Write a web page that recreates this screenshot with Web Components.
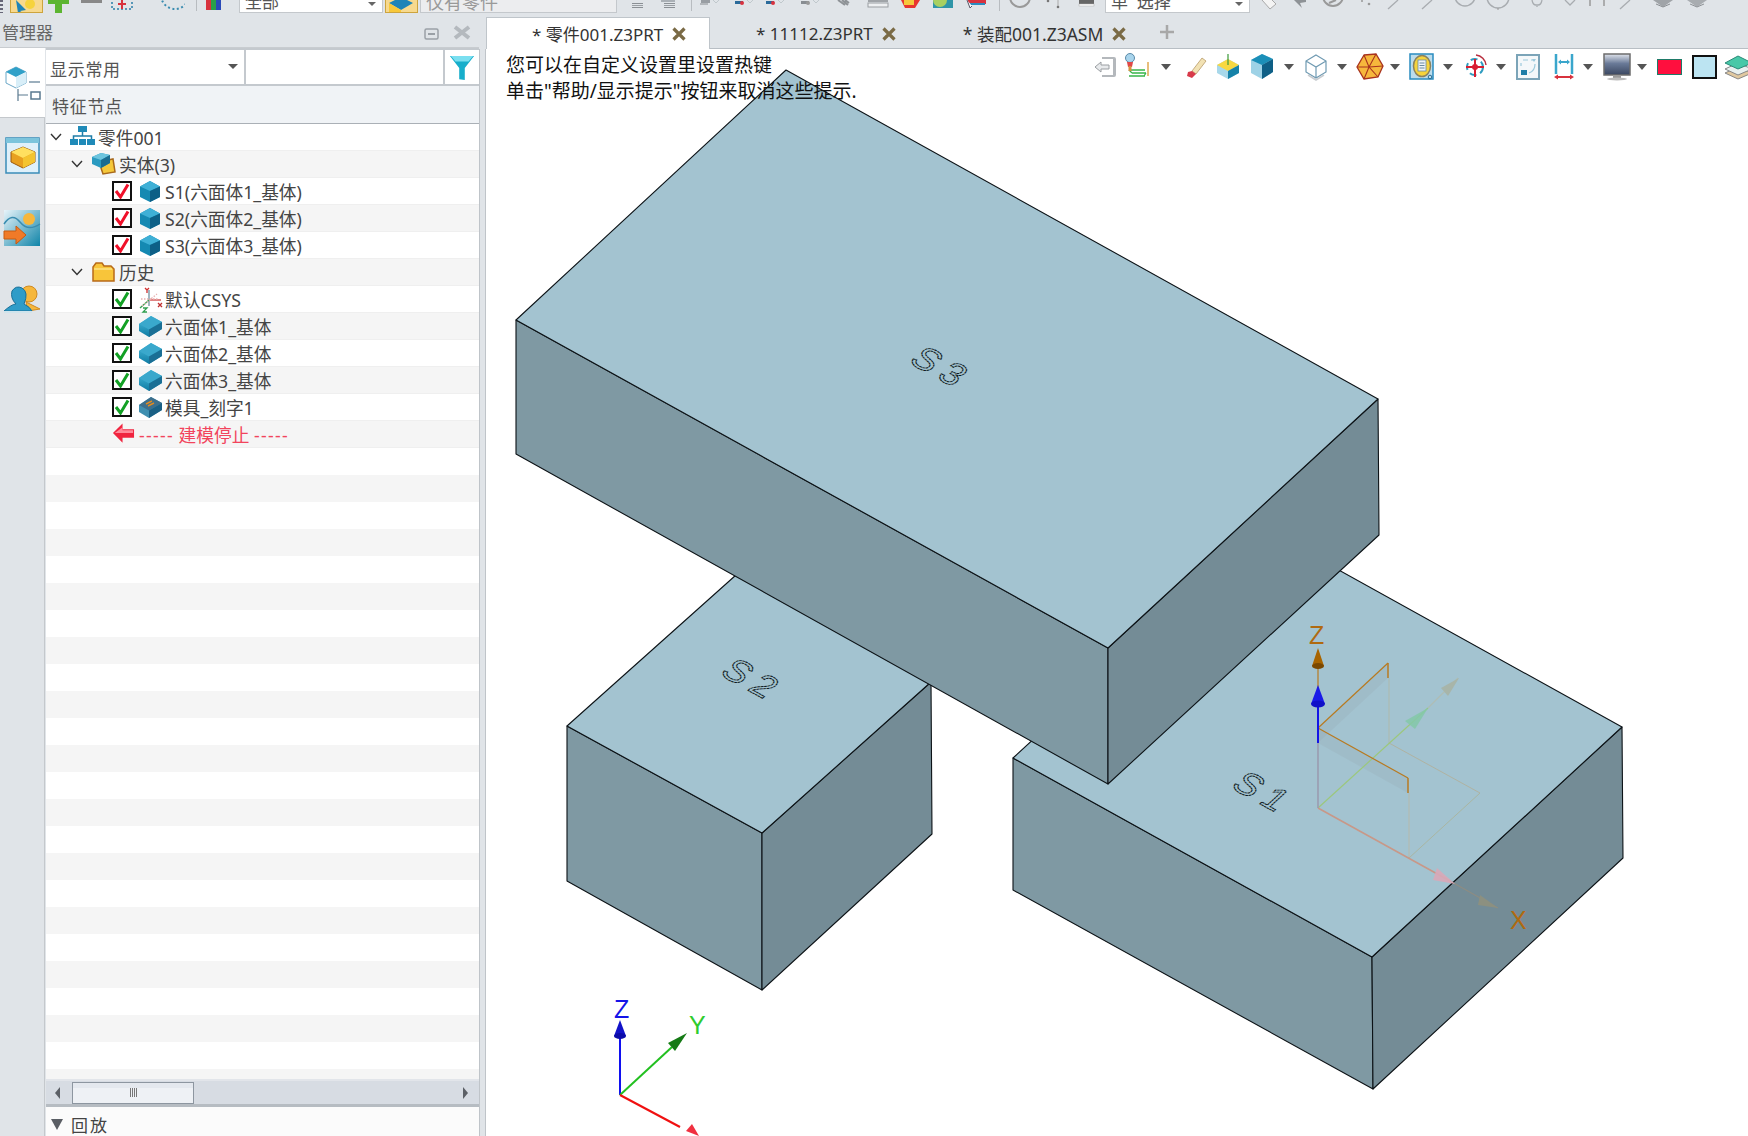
<!DOCTYPE html>
<html><head><meta charset="utf-8">
<style>
html,body{margin:0;padding:0;background:#fff}
body{font-family:"Noto Sans","Noto Sans CJK SC",sans-serif}
</style></head>
<body>
<app-shell>
  <top-bar slot="top"></top-bar>
  <manager-panel slot="left">
    <tree-row indent="3" chev icon="asm">零件001</tree-row>
    <tree-row indent="24" chev icon="solid" alt>实体(3)</tree-row>
    <tree-row indent="66" check="red" icon="cube">S1(六面体1_基体)</tree-row>
    <tree-row indent="66" check="red" icon="cube" alt>S2(六面体2_基体)</tree-row>
    <tree-row indent="66" check="red" icon="cube">S3(六面体3_基体)</tree-row>
    <tree-row indent="24" chev icon="folder" alt>历史</tree-row>
    <tree-row indent="66" check="green" icon="csys">默认CSYS</tree-row>
    <tree-row indent="66" check="green" icon="flat" alt>六面体1_基体</tree-row>
    <tree-row indent="66" check="green" icon="flat">六面体2_基体</tree-row>
    <tree-row indent="66" check="green" icon="flat" alt>六面体3_基体</tree-row>
    <tree-row indent="66" check="green" icon="engrave">模具_刻字1</tree-row>
    <tree-row indent="66" icon="stop" stop alt><span style="letter-spacing:1.300px">-----</span> 建模停止 <span style="letter-spacing:1.300px">-----</span></tree-row>
  </manager-panel>
  <doc-area slot="right"></doc-area>
</app-shell>
<script>
const ICONS={
cube:`<path d="M12 2 22 7.500V18L12 23 2 18V7.500Z" fill="#1589b2"/><path d="M12 2 22 7.500 12 12 2 7.500Z" fill="#3fb0d6"/><path d="M12 12 22 7.500V18L12 23Z" fill="#0d5f86"/>`,
flat:`<defs><linearGradient id="f" x1="0" y1="0" x2="0" y2="1"><stop offset="0" stop-color="#4cc0e0"/><stop offset="1" stop-color="#0f7ba3"/></linearGradient></defs><path d="M13 2 24 8V15L11 23 1 17V10Z" fill="url(#f)"/><path d="M13 2 24 8 11 15.500 1 10Z" fill="#3aa8cc"/><path d="M11 15.500 24 8V15L11 23Z" fill="#1a6f95"/>`,
engrave:`<path d="M13 2 24 8V15L11 23 1 17V10Z" fill="#3f8fb0"/><path d="M13 2 24 8 11 15.500 1 10Z" fill="#3d6f8c"/><path d="M11 15.500 24 8V15L11 23Z" fill="#1a6085"/><path d="M8 9 14 6M10 11 16 8" stroke="#e08a20" stroke-width="1.500"/>`,
asm:`<rect x="8" y="1" width="9" height="6" fill="#1f8ab8"/><path d="M12.500 7V11M3.500 15V11H21.500V15" fill="none" stroke="#1f7ea8" stroke-width="1.500"/><rect x="0" y="14" width="8" height="6" fill="#1f8ab8"/><rect x="9" y="14" width="7" height="6" fill="#1f8ab8"/><rect x="17" y="14" width="8" height="6" fill="#1f8ab8"/>`,
solid:`<path d="M8 10 22 7 24 20 12 22Z" fill="#f5c83a" stroke="#a8691c" stroke-width="1.500"/><path d="M10 1 19 3V11L10 16 1 12V5Z" fill="#2a9ac0"/><path d="M10 1 19 3 10 8 1 5Z" fill="#6cc4de"/><path d="M10 8 19 3V11L10 16Z" fill="#1a6c90"/>`,
folder:`<path d="M2 21V7L5 3H11L13 6H20L23 9V21Z" fill="#f8c53a" stroke="#b86a18" stroke-width="1.500"/><path d="M3 9H21" stroke="#fff2a8"/>`,
csys:`<g fill="none" stroke-width="1.300"><path d="M11 3V19" stroke="#7090a0"/><path d="M11 13H23" stroke="#d04040"/><path d="M11 13 2 21" stroke="#30a050"/><path d="M3 12H20M4 19 19 7" stroke="#e8b0b0" stroke-dasharray="1.500 1.500"/><path d="M7 1 9 3 11 1M9 3V6" stroke="#d03030"/><path d="M20 16 24 20M24 16 20 20" stroke="#c03030"/><path d="M5 21H9L5 25H9" stroke="#30a050"/></g>`,
stop:`<path d="M1 11 11 1V7H23V16H11V21Z" fill="#f0243f"/><path d="M3 11 11 5V8H22V11H3Z" fill="#ff8a9a"/>`,
back:`<path d="M8 4V2H20Q22 2 22 4V20Q22 22 20 22H8V20H19V4Z" fill="#b4b8bc"/><path d="M1 12 7 7V10H15V14H7V17Z" fill="#e8eaec" stroke="#9a9ea2"/>`,
mill:`<path d="M5 17H21M8 20H22M5 23H21M5 17 8 20M22 20 20 23" stroke="#39b54a" fill="none" stroke-width="1.300" transform="translate(3 0)"/><path d="M27 9V23" stroke="#e0a850" stroke-width="1.500"/><circle cx="9" cy="5" r="4.500" fill="#a8d4ec" stroke="#5a8aa8"/><path d="M6 9H12L11 14H7Z" fill="#e04848"/><rect x="7.500" y="13" width="3" height="5" fill="#d89040"/>`,
eraser:`<path d="M19 3 23 6 13 19 9 16Z" fill="#f2e2b4" stroke="#b89a68" stroke-width=".8"/><path d="M9 16 13 19 9 23 4 21 5 17Z" fill="#d83a4a"/>`,
ycube:`<path d="M12 6 23 12V20L12 26 1 20V12Z" fill="#a8d8ea"/><path d="M12 6 23 12 12 18 1 12Z" fill="#f8d840"/><path d="M12 18 23 12V20L12 26Z" fill="#1582a8"/><path d="M12 12V1" stroke="#3a9a3a" stroke-width="1.200"/>`,
bcube:`<path d="M13 1 24 6V19L13 26 2 20V7Z" fill="#9ed2e6"/><path d="M13 1 24 6 13 12 2 7Z" fill="#1b8fb8"/><path d="M13 12 24 6V19L13 26Z" fill="#0e5f86"/>`,
wcube:`<path d="M12 2 22 8V19L12 25 2 19V8ZM2 8 12 14 22 8M12 14V25" fill="#fff" stroke="#6f9ab2" stroke-width="1.200"/><path d="M4 22 12 27 20 22" fill="none" stroke="#c8ccd0" stroke-width="1.500"/>`,
poly:`<path d="M8 2 20 1 27 13 22 24 8 26 1 14Z" fill="#f6b73c" stroke="#a8321e" stroke-width="1.300"/><path d="M8 2 13 14 20 1M1 14H13L22 24M13 14 8 26M13 14 27 13" fill="none" stroke="#a8321e" stroke-width="1.100"/>`,
doc:`<rect x="1" y="1" width="23" height="25" fill="#bcdcec" stroke="#2a8cc0" stroke-width="1.500"/><ellipse cx="13" cy="13" rx="8.500" ry="10.500" fill="#f6d33c" stroke="#8a8260" stroke-width="1.500"/><rect x="9" y="7" width="8" height="11" fill="#eef4f8" stroke="#6a8aa0" stroke-width=".8"/><path d="M10.500 10H15.500M10.500 12.500H15.500M10.500 15H15.500" stroke="#6a8aa0"/><circle cx="21" cy="24" r="1.800" fill="none" stroke="#2a6c90"/>`,
target:`<g transform="translate(1 0)"><circle cx="12" cy="14" r="8" fill="none" stroke="#2e9cc0" stroke-width="2" stroke-dasharray="7 4"/><path d="M12 6V24M3 14H21" stroke="#d81e32" stroke-width="2"/><circle cx="12" cy="14" r="3" fill="#d81e32"/><path d="M13 2A11 11 0 0 1 23 12" fill="none" stroke="#b83040" stroke-width="1.500"/></g>`,
frame:`<rect x="1" y="2" width="22" height="24" fill="#f4f8fa" stroke="#7ba4b8" stroke-width="2"/><path d="M7 7H12M5 10V13M15 7H19M19 11Q19 18 13 20" fill="none" stroke="#9ccadc" stroke-width="1.200"/><path d="M16 6H20L18 9Z" fill="#9ccadc"/><rect x="5" y="17" width="6" height="5" fill="#1f7ea8"/>`,
measure:`<path d="M4 1V21M20 1V21" stroke="#3aa6cc" stroke-width="2.500"/><path d="M7 9H17" stroke="#3aa6cc" stroke-width="2"/><path d="M6 9 9 6.500V11.500ZM18 9 15 6.500V11.500Z" fill="#3aa6cc"/><path d="M4 24H20" stroke="#d8323e" stroke-width="2"/><path d="M2 24 6 21.500V26.500ZM22 24 18 21.500V26.500Z" fill="#d8323e"/>`,
monitor:`<defs><linearGradient id="m" x1="0" y1="0" x2="0" y2="1"><stop offset="0" stop-color="#e0e4ec"/><stop offset=".45" stop-color="#6a7a98"/><stop offset="1" stop-color="#3a4660"/></linearGradient></defs><rect x="1" y="1" width="26" height="21" fill="url(#m)" stroke="#6c6c6c" stroke-width="1.500"/><rect x="10" y="22" width="8" height="3" fill="#999"/><ellipse cx="14" cy="26" rx="10" ry="1.500" fill="#bbb"/>`,
layers:`<path d="M1 20 14 26 28 20 14 14Z" fill="#e0c8a0" stroke="#888"/><path d="M1 16 14 22 28 16 14 10Z" fill="#e8f0f0" stroke="#888"/><path d="M1 10 14 16 28 10 14 3Z" fill="#48c8a8" stroke="#2a8a78"/>`,
rail1:`<path d="M12 2 22 7V18L12 23 2 18V7Z" fill="#fff" stroke="#6ba8c8"/><path d="M12 2 22 7 12 12 2 7Z" fill="#2fa0c8"/><path d="M12 12 22 7V18L12 23Z" fill="#d8eef8"/><path d="M25 17H36" stroke="#5a7a90" stroke-width="1.200"/><path d="M14 24V36M14 30H24" stroke="#5a7a90" stroke-width="1.200"/><rect x="27" y="27" width="9" height="7" fill="none" stroke="#5a7a90" stroke-width="1.500"/>`,
rail2:`<rect x="1" y="1" width="33" height="35" fill="#dff0fa" stroke="#3a8cb8" stroke-width="1.500"/><rect x="1" y="1" width="33" height="5" fill="#7cc4dc"/><path d="M18 10 30 15V25L18 31 6 25V15Z" fill="#e8a020" stroke="#9a5a10"/><path d="M18 10 30 15 18 21 6 15Z" fill="#ffe060"/><path d="M18 21 30 15V25L18 31Z" fill="#f4c430"/>`,
rail3:`<defs><linearGradient id="r" x1="0" y1="0" x2="1" y2="1"><stop offset="0" stop-color="#e8f4fa"/><stop offset="1" stop-color="#0f84a8"/></linearGradient></defs><rect x="0" y="0" width="36" height="36" fill="url(#r)"/><path d="M0 14Q8 2 16 12T36 14" fill="none" stroke="#3a8cb0" stroke-width="1.500"/><circle cx="25" cy="9" r="6" fill="#f6b73c"/><path d="M0 21H12V16L22 25 12 34V29H0Z" fill="#f07a28" stroke="#c85a10"/>`,
rail4:`<circle cx="25" cy="12" r="8" fill="#f6b73c" stroke="#d08a20"/><path d="M22 20 36 27 24 29Z" fill="#f6b73c" stroke="#d08a20"/><path d="M0 29Q8 22 12 22 6 16 8 9 12 3 18 6 25 10 20 22Q26 25 28 29Z" fill="#2f9cc8" stroke="#1a7098"/><path d="M0 29H28V31H0Z" fill="#d0e4ec"/>`,
filter:`<path d="M1 1H27L17 14V27L11 26V14Z" fill="#17aecb"/><path d="M2 1H26L21 7H7Z" fill="#7adff0"/>`
};
function svg(name,w,h,vw,vh){return `<svg xmlns="http://www.w3.org/2000/svg" width="${w}" height="${h}" viewBox="0 0 ${vw||w} ${vh||h}" style="display:block;overflow:visible;flex:none">${ICONS[name]||""}</svg>`}
const def=(n,c)=>customElements.define(n,c);
class Base extends HTMLElement{constructor(){super();this.attachShadow({mode:"open"})}}

def("app-shell",class extends Base{constructor(){super();this.shadowRoot.innerHTML=`<style>
:host{display:grid;grid-template-columns:479px 7px 1fr;grid-template-rows:13px 1fr;width:1748px;height:1136px;overflow:hidden;background:#e0e4e8;color:#444}
.top{grid-column:1/-1;min-width:0;overflow:hidden}
.div{background:#e0e4e8;border-left:1px solid #bfc4c9;border-right:1px solid #bfc4c9;margin:36px 0 0}
.l,.r{min-width:0;min-height:0}
</style><div class="top"><slot name="top"></slot></div><div class="l"><slot name="left"></slot></div><div class="div"></div><div class="r"><slot name="right"></slot></div>`}});

def("top-bar",class extends Base{constructor(){super();
const g=(c)=>`<svg width="24" height="24" viewBox="0 0 24 24" style="display:block">${c}</svg>`;
const arrowish='<path d="M17 0 20 3 23 0" fill="none" stroke="#c0c8cc"/>';
const tick='<rect x="3" y="3" width="11" height="1" fill="#8a8f94"/><rect x="3" y="5" width="11" height="1" fill="#9a9fa4"/><rect x="3" y="7" width="11" height="1" fill="#8a8f94"/>';
const small=[[641,tick],[673,'<rect x="-4" y="0" width="18" height="2" fill="#aab0b6"/>'+tick],
[708,'<rect x="5" y="0" width="9" height="3" fill="#999ea3"/><rect x="4" y="3" width="8" height="2" fill="#b4b8bc"/>'+arrowish],
[742,'<rect x="5" y="1" width="8" height="3" fill="#2a6a9a"/><circle cx="12" cy="3" r="2" fill="#d8323e"/>'+arrowish],
[773,'<rect x="5" y="1" width="8" height="3" fill="#2a6a9a"/><circle cx="12" cy="3" r="2" fill="#d8323e"/>'+arrowish],
[808,'<rect x="5" y="1" width="8" height="3" fill="#888d92"/><circle cx="12" cy="3" r="2" fill="#999"/>'+arrowish],
[845,'<path d="M5 0 12 5M9 0 15 5M12 0 16 3" stroke="#8e9296" stroke-width="2"/>'],
[878,'<rect x="2" y="0" width="20" height="2" fill="#a0a4a8"/><rect x="2" y="3" width="20" height="4" fill="#eef0f2" stroke="#9a9ea2"/>'],
[910,'<path d="M3 0H22L17 8 7 8Z" fill="#e8352e"/><rect x="6" y="0" width="10" height="5" fill="#f6c83c"/>'],
[943,'<rect x="2" y="0" width="20" height="8" fill="#2f95a8"/><circle cx="9" cy="0" r="7" fill="#a8d060"/><path d="M9 0A7 7 0 0 0 2 0" fill="#f2f2ea"/>'],
[977,'<rect x="3" y="0" width="18" height="4" fill="#d8323e"/><rect x="4" y="3" width="16" height="2" fill="#2a8cc0"/><path d="M2 0 5 8 7 6" fill="#fff" stroke="#556"/>'],
[1020,'<circle cx="12" cy="-3" r="10" fill="none" stroke="#999" stroke-width="2"/>'],
[1048,'<circle cx="12" cy="1" r="1.300" fill="#777"/>'],[1058,'<path d="M12 0V6" stroke="#aaa"/><circle cx="12" cy="7" r="1.300" fill="#777"/>'],
[1087,'<rect x="4" y="0" width="15" height="4" fill="#666"/><rect x="4" y="4" width="15" height="2" fill="#fff" stroke="#aaa" stroke-width=".5"/>'],
[1270,'<path d="M4 0 12 9 18 4 14 0" fill="#f4f4f4" stroke="#a8a8a8"/>'],
[1300,'<path d="M6 0 14 8 12 3 18 2V0Z" fill="#8e9296"/>'],
[1333,'<circle cx="12" cy="-4" r="10" fill="none" stroke="#999" stroke-width="2"/><path d="M8 3 15 0" stroke="#999" stroke-width="2"/>'],
[1365,'<circle cx="9" cy="1" r="1" fill="#999"/><circle cx="16" cy="4" r="1.300" fill="#999"/>'],
[1393,'<path d="M17 0 7 9" stroke="#a8acb0" stroke-width="1.300"/>'],[1427,'<path d="M17 0 7 9" stroke="#a8acb0" stroke-width="1.300"/>'],
[1465,'<circle cx="12" cy="-4" r="10" fill="none" stroke="#a8acb0" stroke-width="1.500"/>'],
[1498,'<circle cx="12" cy="-3" r="11" fill="none" stroke="#a8acb0" stroke-width="1.500"/><path d="M12 8V10" stroke="#999"/>'],
[1537,'<path d="M7 0Q8 5 11 5H13Q16 5 17 0M12 6V7" fill="none" stroke="#a8acb0" stroke-width="1.300"/>'],
[1570,'<path d="M7 0 12 5 17 0" fill="none" stroke="#a8acb0" stroke-width="1.300"/>'],
[1597,'<path d="M5 0V6M19 0V6" stroke="#999" stroke-width="1.500"/>'],
[1625,'<path d="M17 0 7 9" stroke="#a8acb0" stroke-width="1.300"/>'],
[1663,'<path d="M2 0H22L12 7Z" fill="#a0a4a8"/><path d="M5 4 12 7 19 4" fill="none" stroke="#8a8e92"/>'],
[1697,'<path d="M2 0H22L12 7Z" fill="#a8acb0"/><path d="M5 4 12 7 19 4" fill="none" stroke="#8e9296"/>']];
const lead=(l,w,c)=>`<span class="i" style="margin-left:${l}px;width:${w}px">${g(c)}</span>`;
let html=`<span class="dots"></span>`;
html+=`<span class="btn"><svg width="30" height="24" viewBox="0 0 30 24"><path d="M5 0 15 10 9 11 12 13H7Z" fill="#1e84b8"/><circle cx="19" cy="4" r="5" fill="#f6d33c"/></svg></span>`;
html+=lead(3,24,'<rect x="9" y="0" width="7" height="13" fill="#5cb531"/><rect x="2" y="0" width="21" height="4" fill="#5cb531"/>');
html+=lead(9,24,'<rect x="2" y="0" width="21" height="3" fill="#888"/>');
html+=lead(8,26,'<rect x="1" y="-6" width="20" height="15" fill="none" stroke="#2a7ea8" stroke-width="1.500" stroke-dasharray="2 2"/><path d="M11 0V9M7 4H15" stroke="#d8323e" stroke-width="2"/>');
html+=lead(24,28,'<circle cx="14" cy="-5" r="14" fill="none" stroke="#3a8cb0" stroke-width="2" stroke-dasharray="2 2.500"/>');
html+=`<span class="sep" style="margin-left:7px"></span>`;
html+=lead(9,16,'<rect x="0" y="0" width="5" height="10" fill="#d8323e"/><rect x="5" y="0" width="5" height="10" fill="#2aa04a"/><rect x="10" y="0" width="5" height="10" fill="#2a4ab8"/>');
html+=`<span class="combo" style="width:144px;margin-left:17px"><b style="font-size:17px">全部</b><i></i></span>`;
html+=`<span class="btn" style="margin-left:2px"><svg width="30" height="24" viewBox="0 0 30 24"><path d="M15 -3 27 3 15 10 3 3Z" fill="#1e84b8"/><path d="M3 3 15 10V12H3Z" fill="#f8c83a"/></svg></span>`;
html+=`<span class="combo dis" style="width:197px;margin-left:2px"><b style="font-size:18px">仅有零件</b></span>`;
this.shadowRoot.innerHTML=`<style>
:host{display:block;position:relative;height:13px;background:#e0e4e8;overflow:hidden;font:16px "Noto Sans","Noto Sans CJK SC",sans-serif;color:#555}
.row{display:flex;align-items:flex-start;height:13px}
.i{display:block;flex:none;height:13px;overflow:hidden}
.dots{width:3px;flex:none;height:13px;margin-right:7px;background:repeating-linear-gradient(#667 0 2px,transparent 2px 4px)}
.btn{display:block;flex:none;width:31px;height:12px;background:#f7d98e;border:1px solid #cda43e;border-top:0;overflow:hidden}
.sep{display:block;flex:none;width:1px;height:11px;background:#b8bcc0}
.combo{display:flex;flex:none;height:13px;box-sizing:border-box;background:#fff;border:1px solid #c4c8cc;border-top:0;position:relative;overflow:hidden;align-items:flex-end}
.combo b{font-weight:400;font-size:16px;line-height:22px;height:13px;display:block;margin:-9px 0 0 5px;align-self:flex-start;white-space:pre}
.combo i{position:absolute;right:6px;top:2px;border:4px solid transparent;border-top-color:#666}
.dis{background:#ecedef;color:#999}
.abs{position:absolute;top:0}
</style><div class="row">${html}</div>
${small.map(([x,c])=>`<span class="i abs" style="left:${x-12}px;width:24px">${g(c)}</span>`).join("")}
<span class="sep abs" style="left:691px"></span><span class="sep abs" style="left:999px"></span>
<span class="combo abs" style="left:1105px;width:145px"><b style="font-size:17px">单  选择</b><i></i></span>`}});

def("manager-panel",class extends Base{constructor(){super();this.shadowRoot.innerHTML=`<style>
:host{display:flex;flex-direction:column;height:100%;font:17px "Noto Sans","Noto Sans CJK SC",sans-serif;color:#555}
.title{height:35px;flex:none;display:flex;align-items:flex-end;padding:0 8px 1px 2px;box-sizing:border-box;gap:0;border-bottom:1px solid #c8ccd0;color:#666}
.title span{flex:1;font-size:17px;line-height:26px}
.title svg{display:block;margin-bottom:6px}
.body{flex:1;display:flex;min-height:0}
.rail{width:44px;flex:none;display:flex;flex-direction:column;align-items:center;background:#e0e4e8;border-right:1px solid #c4c8cc;box-sizing:content-box}
.rtab{align-self:stretch;height:70px;background:#fff;border-bottom:1px solid #c4c8cc;box-sizing:border-box;display:flex;justify-content:center;padding-top:17px;margin-right:-1px}
.rail .a{margin-top:19px}.rail .b{margin-top:36px}.rail .c{margin-top:36px}
.main{flex:1;display:flex;flex-direction:column;min-width:0;margin-left:1px}
.bar{display:flex;gap:2px;height:38px;flex:none;box-sizing:border-box;padding:2px 0;background:#c4c9ce}
.cb{flex:none;background:#fff;display:flex;align-items:center;position:relative;box-sizing:border-box;padding-top:2px}
.cb i{position:absolute;right:6px;top:14px;border:5px solid transparent;border-top:5px solid #555;border-bottom:0}
.head{height:38px;flex:none;background:#f0f3f6;border-bottom:1px solid #aab0b6;box-sizing:border-box;padding:2px 0 0 6px;line-height:38px;font-size:17px;letter-spacing:.7px;color:#555}
.tree{flex:1;min-height:0;background:repeating-linear-gradient(#fff 0 27px,#f5f5f5 27px 54px);overflow:hidden}
.scroll{height:25px;flex:none;background:#d7dce3;border-top:2px solid #e2e5ea;box-sizing:border-box;display:flex;align-items:center;padding-left:9px;position:relative}
.tl,.tr{width:0;height:0;border:6px solid transparent;border-left:0;border-right:5px solid #5c6066;flex:none}
.tr{border-right:0;border-left:5px solid #5c6066;position:absolute;right:11px}
.thumb{margin-left:12px;width:122px;height:22px;background:linear-gradient(#e4e8ee 0 5px,#eef1f5 5px);border:1px solid #8d96a0;box-sizing:border-box;display:flex;justify-content:center;align-items:center}
.thumb u{display:block;width:7px;height:9px;background:repeating-linear-gradient(90deg,#777 0 1px,transparent 1px 2px)}
.sepb{height:3px;flex:none;background:#b6bcc2}
.foot{height:29px;flex:none;background:#fbfbfb;display:flex;align-items:center;padding-left:5px;gap:8px;font-size:17px;letter-spacing:2px;color:#444;padding-top:6px;box-sizing:border-box}
.foot i{width:0;height:0;border:6px solid transparent;border-top:11px solid #5a5e64;border-bottom:0}
</style>
<div class="title"><span>管理器</span>
<svg width="15" height="12" viewBox="0 0 15 12" style="margin-right:14px"><rect x="1" y="1" width="13" height="10" rx="1.500" fill="none" stroke="#9aa0a6" stroke-width="1.500"/><rect x="4" y="5" width="7" height="2" fill="#9aa0a6"/></svg>
<svg width="18" height="15" viewBox="0 0 18 15"><path d="M2 2 16 13M16 2 2 13" stroke="#b4b9be" stroke-width="4"/></svg></div>
<div class="body"><div class="rail">
<div class="rtab">${svg("rail1",38,38)}</div>
<div class="a">${svg("rail2",35,37)}</div><div class="b">${svg("rail3",36,36)}</div><div class="c">${svg("rail4",36,32)}</div></div>
<div class="main"><div class="bar">
<div class="cb" style="width:198px;padding-left:4px;letter-spacing:.7px">显示常用<i></i></div>
<div class="cb" style="width:197px"></div>
<div class="cb" style="width:34px;justify-content:center">${svg("filter",26,28,28,28)}</div></div>
<div class="head">特征节点</div>
<div class="tree"><slot></slot></div>
<div class="scroll"><span class="tl"></span><span class="thumb"><u></u></span><span class="tr"></span></div>
<div class="sepb"></div>
<div class="foot"><i></i>回放</div>
</div></div>`}});

def("tree-row",class extends Base{connectedCallback(){
const ind=+this.getAttribute("indent");const chk=this.getAttribute("check");const ic=this.getAttribute("icon");const chev=this.hasAttribute("chev");const stop=this.hasAttribute("stop");
const bg=this.hasAttribute("alt")?"#f5f5f5":"#fff";
let inner="";
if(chev)inner+=`<svg width="14" height="10" viewBox="0 0 14 10" style="display:block;flex:none;margin-right:7px"><path d="M2 2 7 7.500 12 2" fill="none" stroke="#333" stroke-width="1.400"/></svg>`;
if(chk){const col=chk==="red"?"#f0102a":"#12a024";inner+=`<span class="ck"><svg width="16" height="16" viewBox="0 0 16 16" style="display:block"><path d="M2 8 6.500 14 14 1.500" fill="none" stroke="${col}" stroke-width="3"/></svg></span>`}
const w=stop?23:25;
inner+=`<span class="ic" style="margin-left:${chk?6:0}px;width:${w}px">${svg(ic,w,24,stop?24:25,24)}</span>`;
this.shadowRoot.innerHTML=`<style>
:host{display:block;height:27px}
.r{height:27px;box-sizing:border-box;background:${bg};border-bottom:1px solid #efefef;display:flex;align-items:center;padding-left:${ind}px;font-size:17.700px;white-space:pre;color:${stop?"#f2445c":"#454545"}}
.ck{display:block;flex:none;width:20px;height:20px;box-sizing:border-box;border:2px solid #111;background:#fff;padding:0;overflow:hidden}
.ic{display:block;flex:none}
.t{margin-left:${stop?4:chk?2:3}px;line-height:27px;padding-top:3px}
</style><div class="r">${inner}<span class="t"><slot></slot></span></div>`}});

def("doc-tab",class extends Base{connectedCallback(){const act=this.hasAttribute("active");
this.shadowRoot.innerHTML=`<style>
:host{display:flex;flex:none;align-items:center;box-sizing:border-box;height:${act?32:31}px;font-size:17px;color:#333;white-space:nowrap;
${act?"background:#fff;border:1px solid #bfc5ca;border-bottom:0;margin-top:4px;":"margin-top:5px;"}}
svg{display:block;margin-left:9px;flex:none}
</style><span><slot></slot></span><svg width="14" height="14" viewBox="0 0 14 14"><path d="M1.500 1.500 12.500 12.500M12.500 1.500 1.500 12.500" stroke="#7a6a45" stroke-width="3.200"/></svg>`}});

def("doc-area",class extends Base{constructor(){super();
this.shadowRoot.innerHTML=`<style>
:host{display:flex;flex-direction:column;height:100%;font:17px "Noto Sans","Noto Sans CJK SC",sans-serif}
.tabs{height:36px;flex:none;display:flex;align-items:flex-start;border-bottom:1px solid #b8bec4;box-sizing:border-box;background:#e0e4e8}
.plus{margin:11px 0 0 33px}
view-port{flex:1;min-height:0}
</style><div class="tabs">
<doc-tab active style="width:224px;padding-left:45px">* 零件001.Z3PRT</doc-tab>
<doc-tab style="margin-left:46px">* 11112.Z3PRT</doc-tab>
<doc-tab style="margin-left:67px;font-size:17.500px">* 装配001.Z3ASM</doc-tab>
<svg class="plus" width="16" height="16" viewBox="0 0 16 16"><path d="M8 1V15M1 8H15" stroke="#a8a8a8" stroke-width="2.500"/></svg>
</div><view-port></view-port>`}});

def("view-tools",class extends Base{constructor(){super();
const items=[["back",24,24,0],["mill",28,28,3],["dd",10,0,12],["eraser",24,24,12],["ycube",26,28,9],["bcube",28,28,7],["dd",10,0,7],["wcube",26,28,10],["dd",10,0,7],["poly",28,28,9],["dd",10,0,6],["doc",26,28,9],["dd",10,0,8],["target",26,28,9],["dd",10,0,8],["frame",24,28,10],["measure",24,28,12],["dd",10,0,7],["monitor",28,28,10],["dd",10,0,6],["red",25,0,10],["blue",25,0,10],["layers",29,28,7]];
this.shadowRoot.innerHTML=`<style>
:host{display:flex;align-items:center;height:28px}
span{display:block;flex:none}
.dd{width:0;height:0;border:5px solid transparent;border-top:6px solid #555;border-bottom:0}
.red{height:16px;background:#ff0f3e;border:1.500px solid #1f7a68;box-sizing:border-box}
.blue{height:24px;background:#bce4f2;border:2px solid #111;box-sizing:border-box}
</style>`+items.map(([n,w,h,m])=>{const st=`margin-left:${m}px;`;
if(n==="dd")return `<span class="dd" style="${st}"></span>`;
if(n==="red"||n==="blue")return `<span class="${n}" style="${st}width:${w}px"></span>`;
return `<span style="${st}width:${w}px">${svg(n,w,h,w,h)}</span>`}).join("")}});

def("view-port",class extends Base{constructor(){super();
const poly=(p,f)=>`<polygon points="${p}" fill="${f}" stroke="#0c1216" stroke-width="1.100" stroke-linejoin="round"/>`;
const ln=(a,b,c,d,s,w,o)=>`<line x1="${a}" y1="${b}" x2="${c}" y2="${d}" stroke="${s}" stroke-width="${w||1}" stroke-opacity="${o==null?1:o}"/>`;
const tri=(p,f,o)=>`<polygon points="${p}" fill="${f}" fill-opacity="${o==null?1:o}"/>`;
const eng=(t,x,y)=>`<text transform="matrix(.875 .484 -.734 .68 ${x} ${y})" text-anchor="middle" dominant-baseline="central" font-family="Liberation Sans" font-size="36" letter-spacing="8" fill="none" stroke="#101c24" stroke-width="1.100" stroke-dasharray="2.500 .5">${t}</text>`;
this.shadowRoot.innerHTML=`<style>
:host{display:block;position:relative;background:#fff;overflow:hidden}
svg.c{position:absolute;left:0;top:0;display:block}
.hint{position:absolute;left:20px;top:4px;font-size:19px;line-height:25.500px;color:#111;white-space:nowrap}
view-tools{position:absolute;left:608px;top:4px}
</style>
<svg class="c" width="1262" height="1088" viewBox="486 49 1262 1088" font-family="Liberation Sans">
${poly("567,726 762,833 762,990 567,881","#7f99a3")}${poly("762,833 931,682 932,834 762,990","#748c96")}${poly("567,726 736,575 931,682 762,833","#a3c3d0")}
${eng("S2",754,680)}
${poly("1013,758 1372,957 1373,1089 1013,890","#7f99a3")}${poly("1372,957 1622,727 1623,858 1373,1089","#748c96")}${poly("1013,758 1263,528 1622,727 1372,957","#a3c3d0")}
${eng("S1",1265,793)}
${poly("516,320 1108,648 1108,784 516,454","#7f99a3")}${poly("1108,648 1378,399 1379,535 1108,784","#748c96")}${poly("516,320 786,70 1378,399 1108,648","#a3c3d0")}
${eng("S3",943,368)}
${tri("1318,728 1388,663 1388,678 1318,743","#8d9ea0",.16)}${tri("1318,728 1408,778 1408,793 1318,743","#8d9ea0",.16)}
${ln(1389,678,1389,743,"#b0b8a8",1,.9)}${ln(1409,793,1409,858,"#b8b8a8",1,.9)}${ln(1389,743,1480,793,"#b0b09c",1,.9)}${ln(1480,793,1409,858,"#aab49c",1,.9)}
${ln(1318,808,1428,708,"#9cc87c",1.200,1)}${ln(1428,708,1458,678,"#b0bcb0",1.100,.9)}
${ln(1318,808,1450,881,"#c89888",1.600,1)}${ln(1450,881,1498,908,"#908c80",1.100,.9)}
${ln(1318,743,1318,808,"#9a9cb0",1.600)}
${ln(1318,728,1388,663,"#b87a20",1.200)}${ln(1318,728,1408,778,"#b87a20",1.200)}${ln(1388,663,1388,678,"#b87a20",1.500)}${ln(1408,778,1408,793,"#b87a20",1.500)}
${ln(1318,668,1318,690,"#b87a20",1.200)}
${ln(1318,705,1318,743,"#1414e6",2)}
<polygon points="1318,648 1324,666 1312,666" fill="#a86400"/><ellipse cx="1318" cy="666" rx="6" ry="3" fill="#7a4800"/>
<polygon points="1318,685 1325,704 1311,704" fill="#1a1ae8"/><ellipse cx="1318" cy="704" rx="7" ry="3.500" fill="#1010c8"/>
${tri("1428,708 1405,721 1415,729","#84c8a8",.85)}
${tri("1459,678 1441,688 1448,696","#a8b4a8",.95)}
${tri("1455,884 1437,868 1433,880","#d8a8b8",.9)}
${tri("1498,908 1480,895 1478,905","#8c9080")}
<text x="1309" y="644" font-size="25" fill="#b06a10">Z</text>
<text x="1510" y="929" font-size="25" fill="#b06a10">X</text>
${ln(620,1095,620,1035,"#1010f0",2)}${ln(620,1095,672,1047,"#22c020",2)}${ln(620,1095,680,1127,"#f01010",2)}
<polygon points="620,1020 626,1036 614,1036" fill="#1212c8"/><ellipse cx="620" cy="1036" rx="6" ry="3" fill="#0c0ca8"/>
<polygon points="687,1033 668,1043 675,1051" fill="#157a15"/>
<polygon points="699,1136 686,1131 692,1124" fill="#f03040"/>
<text x="614" y="1018" font-size="25" fill="#1414e8">Z</text>
<text x="689" y="1034" font-size="25" fill="#2ecc2e">Y</text>
</svg>
<div class="hint">您可以在自定义设置里设置热键<br>单击"帮助/显示提示"按钮来取消这些提示.</div>
<view-tools></view-tools>`}});
</script>
</body></html>
